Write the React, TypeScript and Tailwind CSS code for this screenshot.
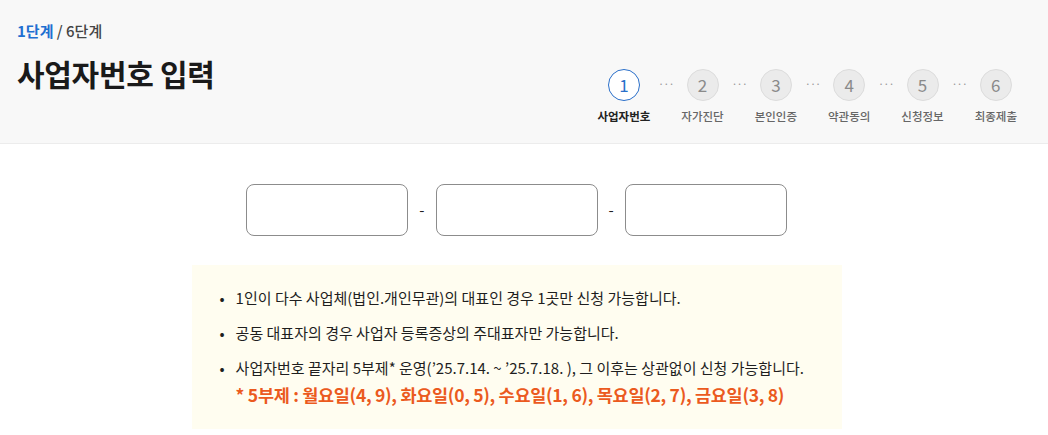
const steps = ["사업자번호", "자가진단", "본인인증", "약관동의", "신청정보", "최종제출"];

const notices = [
  "1인이 다수 사업체(법인.개인무관)의 대표인 경우 1곳만 신청 가능합니다.",
  "공동 대표자의 경우 사업자 등록증상의 주대표자만 가능합니다.",
];

function StepBar() {
  return (
    <ol className="flex items-start">
      {steps.map((label, i) => (
        <li key={label} className="flex items-start">
          {i > 0 && (
            <span className="flex h-8 w-[31px] items-center justify-center pb-1 text-[11px] tracking-[-1px] text-[#999]">
              ···
            </span>
          )}
          <div className="flex flex-col items-center">
            <span
              className={
                i === 0
                  ? "flex h-8 w-8 items-center justify-center rounded-full border border-[#2a6fc9] bg-white text-[17px] text-[#2a6fc9]"
                  : "flex h-8 w-8 items-center justify-center rounded-full border border-[#dcdcdc] bg-[#ebebeb] text-[17px] text-[#8a8a8a]"
              }
            >
              {i + 1}
            </span>
            <span
              className={
                i === 0
                  ? "mt-[7px] whitespace-nowrap text-[11.5px] font-bold text-[#222]"
                  : "mt-[7px] whitespace-nowrap text-[11.5px] font-medium text-[#666]"
              }
            >
              {label}
            </span>
          </div>
        </li>
      ))}
    </ol>
  );
}

function NumberBox() {
  return (
    <input
      type="text"
      className="h-[52px] w-[162px] rounded-lg border border-[#8c8c8c] bg-white px-3 outline-none"
    />
  );
}

export default function App() {
  return (
    <div
      className="min-h-[435px] bg-white text-[#222]"
      style={{ fontFamily: '"Noto Sans CJK KR", "Noto Sans", sans-serif' }}
    >
      <header className="flex h-[144px] items-start justify-between border-b border-[#ececec] bg-[#f8f8f8] pl-[17px] pr-[31px]">
        <div className="pt-[21px]">
          <p className="text-[15px] font-bold leading-5">
            <span className="text-[#1f6fd1]">1단계</span>
            <span className="font-medium text-[#444]"> / 6단계</span>
          </p>
          <h1 className="mt-[12px] text-[30px] font-bold leading-10 tracking-[-0.3px] text-[#1a1a1a]">
            사업자번호 입력
          </h1>
        </div>
        <div className="pt-[69px]">
          <StepBar />
        </div>
      </header>

      <main className="flex flex-col items-center pr-[15px] pt-10">
        <div className="flex items-center gap-[11px] text-[15px]">
          <NumberBox />
          <span>-</span>
          <NumberBox />
          <span>-</span>
          <NumberBox />
        </div>

        <div className="mt-[29px] w-[650px] bg-[#fffdf0] pb-6 pl-7 pr-4 pt-[23px]">
          <ul className="flex flex-col gap-[15px] text-[15px] leading-5 text-[#1e1e1e]">
            {notices.map((text) => (
              <li key={text} className="flex gap-[11px]">
                <span>•</span>
                <span>{text}</span>
              </li>
            ))}
            <li className="flex gap-[11px]">
              <span>•</span>
              <div>
                <p>사업자번호 끝자리 5부제* 운영(’25.7.14. ~ ’25.7.18. ), 그 이후는 상관없이 신청 가능합니다.</p>
                <p className="mt-[7px] whitespace-nowrap text-[17.5px] font-bold tracking-[-0.3px] text-[#eb5a1e]">
                  * 5부제 : 월요일(4, 9), 화요일(0, 5), 수요일(1, 6), 목요일(2, 7), 금요일(3, 8)
                </p>
              </div>
            </li>
          </ul>
        </div>
      </main>
    </div>
  );
}
